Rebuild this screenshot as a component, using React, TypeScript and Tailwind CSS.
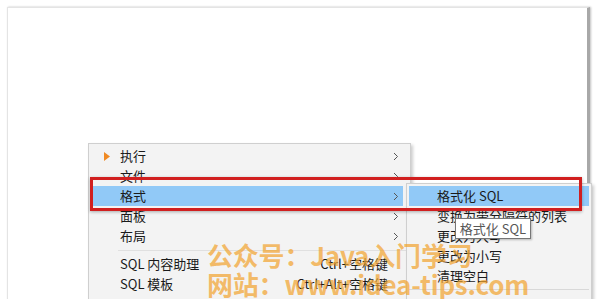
import React from "react";

const Chevron = () => (
  <svg width="6" height="9" viewBox="0 0 6 9" className="shrink-0">
    <path d="M1 1 L4.5 4.5 L1 8" fill="none" stroke="#555" strokeWidth="1" />
  </svg>
);

type Item = { label: string; icon?: boolean; sub?: boolean; hl?: boolean; shortcut?: string; sep?: boolean };

const mainItems: Item[] = [
  { label: "执行", icon: true, sub: true },
  { label: "文件", sub: true },
  { label: "格式", sub: true, hl: true },
  { label: "面板", sub: true },
  { label: "布局", sub: true },
  { label: "", sep: true },
  { label: "SQL 内容助理", shortcut: "Ctrl+空格键" },
  { label: "SQL 模板", shortcut: "Ctrl+Alt+空格键" },
];

const subItems: Item[] = [
  { label: "格式化 SQL", hl: true },
  { label: "变换为带分隔符的列表" },
  { label: "更改为大写" },
  { label: "更改为小写" },
  { label: "清理空白" },
  { label: "", sep: true },
];

export default function App() {
  return (
    <div className="relative w-[600px] h-[299px] overflow-hidden bg-white font-['Noto_Sans_CJK_SC','Noto_Sans',sans-serif] text-[13px] text-[#1a1a1a]">
      <div className="pt-[7px] pl-[7px]">
        <div className="w-[583px] h-[400px] bg-white border-l border-t border-[#e4e4e4] border-r-[3px] border-r-[#a8a8a8] shadow-[1px_0_2px_rgba(0,0,0,0.25)]" />
      </div>

      {/* main context menu */}
      <div className="absolute left-[88px] top-[143px] w-[323px] h-[200px] bg-[#f3f3f3] border border-[#cfcfcf] shadow-[2px_2px_3px_rgba(0,0,0,0.2)] pt-[2px]">
        {mainItems.map((it, i) =>
          it.sep ? (
            <div key={i} className="h-[8px] flex items-center pl-[29px] pr-[3px]">
              <div className="h-px w-full bg-[#e0e0e0]" />
            </div>
          ) : (
            <div
              key={i}
              className={`h-[20px] flex items-center ml-[2px] mr-[7px] pr-[4px] ${it.hl ? "bg-[#91c9f7]" : ""}`}
            >
              <div className="w-[29px] flex items-center justify-center pl-[2px] mr-0">
                {it.icon && (
                  <svg width="6" height="9" viewBox="0 0 6 9">
                    <path d="M0 0 L6 4.5 L0 9 Z" fill="#f08a24" />
                  </svg>
                )}
              </div>
              <span className="flex-1 leading-[20px] whitespace-nowrap">{it.label}</span>
              {it.shortcut && <span className="mr-[11px] leading-[20px] whitespace-nowrap">{it.shortcut}</span>}
              {it.sub && <Chevron />}
            </div>
          )
        )}
      </div>

      {/* submenu */}
      <div className="absolute left-[406px] top-[183px] w-[186px] h-[160px] bg-[#f3f3f3] border border-[#cfcfcf] shadow-[2px_2px_3px_rgba(0,0,0,0.2)] pt-[2px]">
        {subItems.map((it, i) =>
          it.sep ? (
            <div key={i} className="h-[6px] flex items-center pl-[2px] pr-[2px]">
              <div className="h-px w-full bg-[#d8d8d8]" />
            </div>
          ) : (
            <div key={i} className={`h-[20px] flex items-center mx-[2px] pl-[28px] ${it.hl ? "bg-[#91c9f7]" : ""}`}>
              <span className="leading-[20px] whitespace-nowrap">{it.label}</span>
            </div>
          )
        )}
      </div>

      {/* red highlight frame */}
      <div className="absolute left-[90px] top-[177px] w-[492px] h-[34px] border-[3px] border-[#d11f1f] shadow-[0_1px_3px_rgba(0,0,0,0.3)]" />

      {/* tooltip */}
      <div className="absolute left-[455px] top-[218px] w-[76px] h-[21px] bg-white border border-[#767676] shadow-[1px_1px_2px_rgba(0,0,0,0.25)] flex items-center justify-center text-[13px] text-[#575757] leading-none whitespace-nowrap">
        格式化 SQL
      </div>

      {/* watermark */}
      <div className="absolute left-[207px] top-[240px] font-bold text-[26px] leading-[29px] tracking-[-0.2px] text-[rgba(242,165,50,0.72)] whitespace-nowrap">
        <div>公众号：Java入门学习</div>
        <div>网站：www.idea-tips.com</div>
      </div>
    </div>
  );
}
